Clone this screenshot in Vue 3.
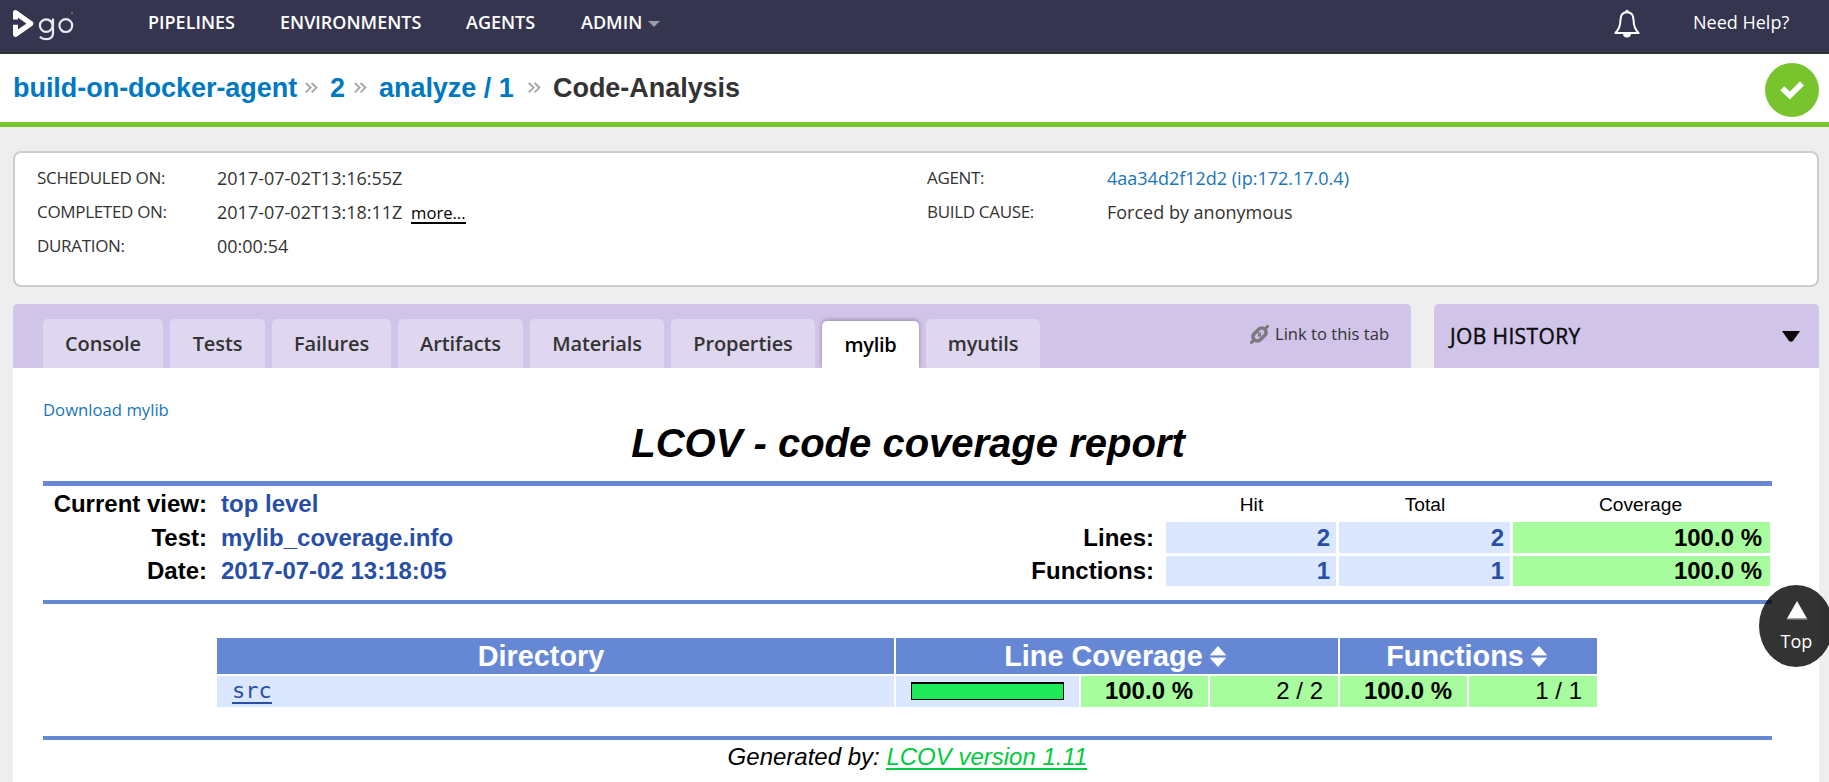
<script setup>
const navItems = [
  { label: 'PIPELINES', cls: 'n1' },
  { label: 'ENVIRONMENTS', cls: 'n2' },
  { label: 'AGENTS', cls: 'n3' },
  { label: 'ADMIN', cls: 'n4', caret: true },
]
const tabs = [
  { label: 'Console', cls: 't-console' },
  { label: 'Tests', cls: 't-tests' },
  { label: 'Failures', cls: 't-failures' },
  { label: 'Artifacts', cls: 't-artifacts' },
  { label: 'Materials', cls: 't-materials' },
  { label: 'Properties', cls: 't-properties' },
  { label: 'mylib', cls: 't-mylib', active: true },
  { label: 'myutils', cls: 't-myutils' },
]
</script>

<template>
  <div class="page">
    <header class="topbar">
      <svg class="logo" width="64" height="34" viewBox="0 0 64 34">
        <path d="M3.5 11.5V4.6L18.9 15.6 3.5 26.4V16.8" fill="none" stroke="#fff" stroke-width="5" stroke-linejoin="round" />
        <g fill="none" stroke="#e9e9ef" stroke-width="2.2">
          <circle cx="34.2" cy="17.6" r="6.3" />
          <path d="M41 10.6V25Q41 31.2 34.4 31.2Q30 31.2 28 28.6" />
          <circle cx="53.8" cy="17.6" r="6.4" />
        </g>
        <circle cx="60" cy="5" r="0.8" fill="#a0a0b0" />
      </svg>
      <nav class="nav">
        <a v-for="n in navItems" :key="n.label" :class="n.cls">{{ n.label }}<i v-if="n.caret" class="caret"></i></a>
      </nav>
      <svg class="bell" width="28" height="30" viewBox="0 0 28 30">
        <path d="M14 3.2C8.8 3.2 7.4 7 7.4 11.5C7.4 17.5 5.8 20.5 2.4 24H25.6C22.2 20.5 20.6 17.5 20.6 11.5C20.6 7 19.2 3.2 14 3.2Z" fill="none" stroke="#fff" stroke-width="2" stroke-linejoin="round" />
        <circle cx="14" cy="2.4" r="1.7" fill="#fff" />
        <path d="M10 24.5H18A4 4 0 0 1 10 24.5Z" fill="#fff" />
      </svg>
      <a class="help">Need Help?</a>
    </header>

    <div class="crumbs">
      <a class="c1">build-on-docker-agent</a>
      <svg class="sep" width="13" height="12" viewBox="0 0 13 12"><path d="M0.8 1L5.6 5.6 0.8 10.4M6.6 1L11.4 5.6 6.6 10.4" /></svg>
      <a class="c2">2</a>
      <svg class="sep" width="13" height="12" viewBox="0 0 13 12"><path d="M0.8 1L5.6 5.6 0.8 10.4M6.6 1L11.4 5.6 6.6 10.4" /></svg>
      <a class="c3">analyze / 1</a>
      <svg class="sep" width="13" height="12" viewBox="0 0 13 12"><path d="M0.8 1L5.6 5.6 0.8 10.4M6.6 1L11.4 5.6 6.6 10.4" /></svg>
      <h1>Code-Analysis</h1>
      <svg class="status" width="54" height="54" viewBox="0 0 54 54">
        <circle cx="27" cy="27" r="27" fill="#78c42c" />
        <path d="M17.3 25.3L24.8 32.6 37 20.5" fill="none" stroke="#fff" stroke-width="5.6" stroke-linejoin="miter" />
      </svg>
    </div>

    <section class="info">
      <dl class="info-left">
        <dt>SCHEDULED ON:</dt><dd>2017-07-02T13:16:55Z</dd>
        <dt>COMPLETED ON:</dt><dd>2017-07-02T13:18:11Z <a class="more">more...</a></dd>
        <dt>DURATION:</dt><dd>00:00:54</dd>
      </dl>
      <dl>
        <dt>AGENT:</dt><dd class="agent">4aa34d2f12d2 (ip:172.17.0.4)</dd>
        <dt>BUILD CAUSE:</dt><dd>Forced by anonymous</dd>
      </dl>
    </section>

    <div class="bars">
      <div class="tabbar">
        <a v-for="t in tabs" :key="t.label" class="tab" :class="[t.cls, { active: t.active }]">{{ t.label }}</a>
        <svg class="chain" width="19" height="19" viewBox="0 0 19 19">
          <path d="M0.5 18.5L4 15" stroke="#777" stroke-width="3" />
          <path d="M15 4L18.5 0.5" stroke="#777" stroke-width="3" />
          <rect x="2" y="5.2" width="15" height="8.6" rx="4.3" transform="rotate(-45 9.5 9.5)" fill="none" stroke="#7c7a80" stroke-width="3.6" />
          <path d="M8 11.6L11 7.4M7.4 7L11.6 12" stroke="#7c7a80" stroke-width="1.6" />
        </svg>
        <span class="linktab">Link to this tab</span>
      </div>
      <div class="history">
        <span>JOB HISTORY</span>
        <svg width="18" height="11" viewBox="0 0 18 11"><path d="M0 0H18L11 10Q9 11.6 7 10Z" fill="#0a0a0a" /></svg>
      </div>
    </div>

    <main class="content">
      <a class="download">Download mylib</a>
      <h2>LCOV - code coverage report</h2>
      <div class="rule thick"></div>

      <div class="summary">
        <span class="k">Current view:</span><span class="v">top level</span><span class="k"></span>
        <span class="h">Hit</span><span class="h">Total</span><span class="h">Coverage</span>
        <span class="k">Test:</span><span class="v">mylib_coverage.info</span><span class="k k2">Lines:</span>
        <span class="num">2</span><span class="num">2</span><span class="pct">100.0 %</span>
        <span class="k r3">Date:</span><span class="v r3">2017-07-02 13:18:05</span><span class="k k2 r3">Functions:</span>
        <span class="num r3">1</span><span class="num r3">1</span><span class="pct r3">100.0 %</span>
      </div>
      <div class="rule"></div>

      <div class="dirs">
        <div class="th"><span class="dirname">Directory</span></div>
        <div class="th th-line">Line Coverage<svg width="16" height="21" viewBox="0 0 16 21"><path d="M8 0L16 9H0ZM0 12H16L8 21Z" fill="#fff" /><path d="M0 9.4H16M0 11.6H16" stroke="#b9c8ec" stroke-width="0.8" /></svg></div>
        <div class="th th-fn">Functions<svg width="16" height="21" viewBox="0 0 16 21"><path d="M8 0L16 9H0ZM0 12H16L8 21Z" fill="#fff" /><path d="M0 9.4H16M0 11.6H16" stroke="#b9c8ec" stroke-width="0.8" /></svg></div>
        <div class="src"><a>src</a></div>
        <div class="barcell"><div class="bar"></div></div>
        <div class="g"><b>100.0 %</b></div>
        <div class="g">2 / 2</div>
        <div class="g"><b>100.0 %</b></div>
        <div class="g">1 / 1</div>
      </div>
      <div class="rule"></div>
      <p class="gen">Generated by: <a>LCOV version 1.11</a></p>
    </main>

    <a class="totop">
      <svg width="22" height="20" viewBox="0 0 22 20"><path d="M11 1L21 18.6H1Z" fill="#fff" /><path d="M0.6 19H21.4" stroke="#aaa" stroke-width="1" /></svg>
      <span>Top</span>
    </a>
  </div>
</template>

<style>
body { margin: 0; background: #eee; }
</style>

<style scoped>
* { box-sizing: border-box; }
.page {
  position: relative;
  width: 1829px;
  height: 782px;
  overflow: hidden;
  background: #eee;
  color: #333;
  font-family: "Open Sans", sans-serif;
  white-space: nowrap;
}
.topbar {
  display: flex;
  height: 54px;
  padding-left: 12px;
  background: #35354f;
  border-bottom: 2px solid #333;
  color: #fff;
  font-size: 18px;
  line-height: 44px;
}
.logo { margin-top: 8px; flex: none; }
.nav { display: flex; margin-left: 72px; width: 1465px; font-weight: 600; }
.n1 { width: 132px; }
.n2 { width: 186px; }
.n3 { width: 115px; }
.caret {
  display: inline-block;
  margin-left: 6px;
  border: 6px solid transparent;
  border-top-color: #9a9aa7;
  border-bottom: 0;
  vertical-align: 2px;
}
.bell { margin-top: 9px; flex: none; }
.help { margin-left: 52px; }

.crumbs {
  display: flex;
  height: 73px;
  padding: 0 10px 0 13px;
  background: #fff;
  border-bottom: 5px solid #78c42c;
  font: bold 27px/69px "Liberation Sans", Arial, sans-serif;
  letter-spacing: -0.04px;
  color: #0078c2;
}
.crumbs h1 { margin: 0 0 0 12px; font: inherit; color: #333; }
.sep { margin-top: 28px; fill: none; stroke: #a8a8a8; stroke-width: 2; flex: none; }
.c1 { width: 292px; }
.c2 { width: 24px; margin-left: 12px; }
.c3 { width: 149px; margin-left: 12px; }
.status { margin: 9px 0 0 auto; }

.info {
  display: grid;
  grid-template-columns: 890px 1fr;
  height: 136px;
  margin: 24px 10px 0 13px;
  padding: 8px 22px;
  background: #fff;
  border: 2px solid #ccc;
  border-radius: 8px;
}
.info dl {
  display: grid;
  grid-template-columns: 180px 1fr;
  grid-auto-rows: 34px;
  margin: 0;
}
.info dt { font-size: 17px; line-height: 33px; letter-spacing: -0.32px; }
.info dd { margin: 0; font-size: 18px; line-height: 34px; }
.info .agent { color: #1a75bb; }
.more {
  display: inline-block;
  margin-left: 4px;
  line-height: 19px;
  font-size: 16.6px;
  color: #000;
  border-bottom: 2px solid #000;
}

.bars { display: flex; gap: 23px; margin: 17px 10px 0 13px; }
.tabbar {
  display: flex;
  align-items: flex-end;
  width: 1398px;
  height: 64px;
  padding-left: 30px;
  background: #d0c4e8;
  border-radius: 5px 5px 0 0;
}
.tab {
  height: 49px;
  margin-right: 7px;
  background: #dfd7ef;
  border-radius: 5px 5px 0 0;
  font-size: 20px;
  font-weight: 600;
  line-height: 49px;
  letter-spacing: -0.1px;
  text-align: center;
}
.tab.active {
  height: 47px;
  background: #fff;
  color: #000;
  line-height: 47px;
  letter-spacing: -0.3px;
  box-shadow: 0 -1px 4px rgba(60, 40, 90, 0.4);
  clip-path: inset(-8px -8px 0 -8px);
}
.t-console { width: 120px; }
.t-tests { width: 95px; }
.t-failures { width: 119px; }
.t-artifacts { width: 125px; }
.t-materials { width: 134px; }
.t-properties { width: 144px; }
.t-mylib { width: 97px; }
.t-myutils { width: 114px; }
.chain { margin: 0 6px 24px 203px; }
.linktab { align-self: flex-start; font-size: 16.6px; line-height: 59px; }
.history {
  display: flex;
  align-items: flex-start;
  justify-content: space-between;
  width: 385px;
  height: 64px;
  padding: 0 19px 0 16px;
  background: #d0c4e8;
  border-radius: 5px 5px 0 0;
  color: #0a0a0a;
  font-size: 21px;
  letter-spacing: 0.38px;
  -webkit-text-stroke: 0.4px #0a0a0a;
  line-height: 64px;
}
.history svg { margin-top: 27px; }

.content {
  height: 420px;
  margin: 0 10px 0 13px;
  padding: 31px 47px 0 30px;
  background: #fff;
  color: #000;
  font-family: "Liberation Sans", Arial, sans-serif;
  font-size: 24px;
}
.download {
  display: block;
  height: 22px;
  font: 16.7px/22px "Open Sans", sans-serif;
  color: #1a75bb;
}
.content h2 {
  margin: 0;
  height: 60px;
  padding-left: 1px;
  font: italic bold 40px/44px "Liberation Sans", Arial, sans-serif;
  text-align: center;
}
.rule { height: 4px; background: #6688d4; }
.rule.thick { height: 5px; }
.summary {
  display: grid;
  grid-template-columns: 178px 700px 245px 173px 174px 257px;
  grid-template-rows: 36px 31px 30px;
  height: 114px;
  font-weight: bold;
}
.summary .k { padding-right: 14px; text-align: right; line-height: 31px; }
.summary .k2 { padding-right: 12px; }
.summary .v { color: #284fa8; line-height: 31px; }
.summary .h { font-size: 19.2px; font-weight: normal; text-align: center; }
.summary .num,
.summary .pct { height: 31px; line-height: 31px; text-align: right; }
.summary .num { margin-right: 3px; padding-right: 6px; background: #dae7fe; color: #284fa8; }
.summary .pct { padding-right: 8px; background: #a7fc9d; color: #000; }
.summary > :nth-child(-n+3) { line-height: 35px; }
.summary .h { line-height: 37px; padding-right: 2px; }
.summary .r3 { margin-top: 3px; height: 30px; line-height: 29px; }

.dirs {
  display: grid;
  grid-template-columns: 677px 183px 127px 128px 127px 128px;
  grid-template-rows: 36px 31px;
  gap: 2px;
  width: 1380px;
  height: 98px;
  margin: 34px 0 0 174px;
}
.th {
  background: #6688d4;
  color: #fff;
  font-size: 28.8px;
  font-weight: bold;
  line-height: 36px;
  text-align: center;
}
.th svg { margin-left: 7px; vertical-align: -1px; }
.dirname { padding-right: 29px; }
.th-line, .th-fn { grid-column: span 2; padding-right: 4px; }
.th-line { grid-column: span 3; }
.src { padding-left: 15px; background: #dae7fe; }
.src a {
  display: inline-block;
  height: 28px;
  border-bottom: 2px solid #284fa8;
  color: #284fa8;
  font: 22px/29px "DejaVu Sans Mono", monospace;
}
.barcell { background: #dae7fe; padding: 6px 0 0 15px; }
.bar { width: 153px; height: 18px; background: #1eea59; border: 1px solid #000; border-top-width: 2px; }
.g { padding-right: 15px; background: #a7fc9d; line-height: 30px; text-align: right; }
.gen { margin: 0; font-style: italic; line-height: 33px; text-align: center; }
.gen a { display: inline-block; line-height: 23px; color: #00cb40; border-bottom: 2px solid #00cb40; }

.totop {
  position: absolute;
  left: 1759px;
  top: 585px;
  width: 74px;
  height: 82px;
  padding: 15px 0 0 1px;
  border-radius: 50%;
  background: rgba(0, 0, 0, 0.8);
  color: #fff;
  font-size: 18px;
  line-height: 42px;
  text-align: center;
}
.totop svg, .totop span { display: block; margin: 0 auto; }
</style>
